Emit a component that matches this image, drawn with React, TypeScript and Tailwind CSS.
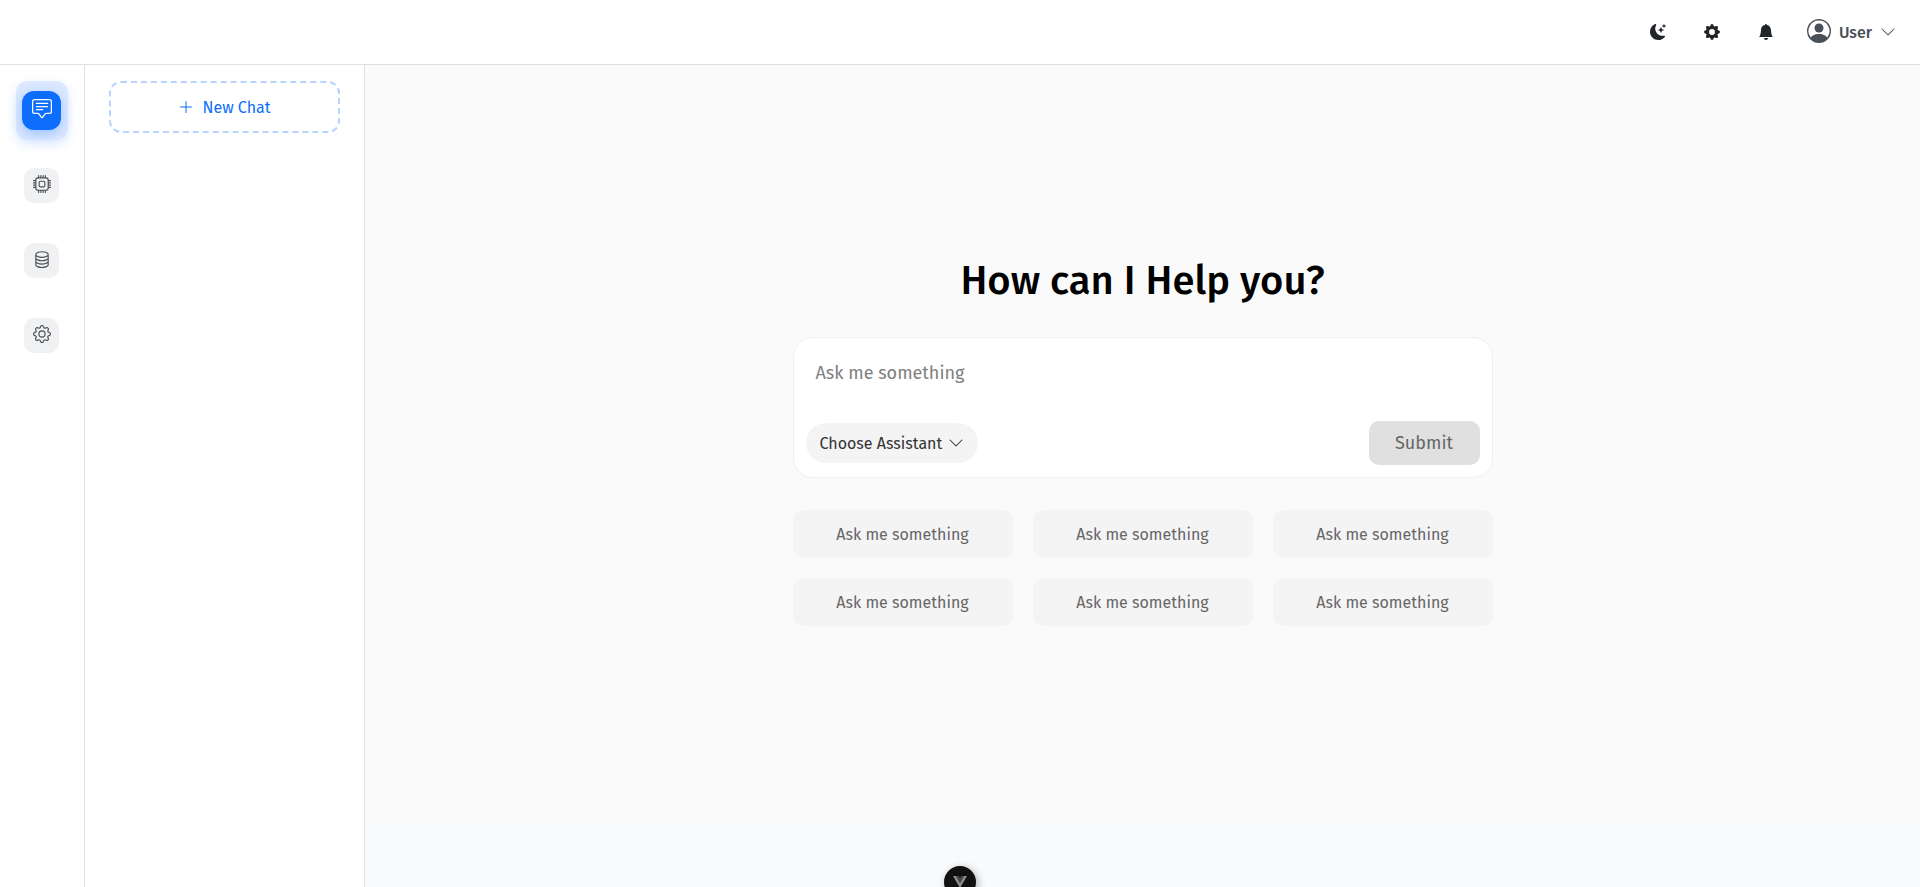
import React, { useState } from 'react';
import {
  BsBellFill,
  BsChatSquareText,
  BsChevronDown,
  BsCpu,
  BsDatabase,
  BsGear,
  BsGearFill,
  BsMoonStarsFill,
  BsPersonCircle,
  BsPlusLg,
} from 'react-icons/bs';
import { clsx } from 'clsx';
import type { IconType } from 'react-icons';

interface SidebarItem {
  label: string;
  icon: IconType;
}

const sidebarItems: SidebarItem[] = [
  { label: 'Chat', icon: BsChatSquareText },
  { label: 'Models', icon: BsCpu },
  { label: 'Knowledge', icon: BsDatabase },
  { label: 'Settings', icon: BsGear },
];

const headerActions: SidebarItem[] = [
  { label: 'Toggle theme', icon: BsMoonStarsFill },
  { label: 'Preferences', icon: BsGearFill },
  { label: 'Notifications', icon: BsBellFill },
];

const suggestions = Array.from({ length: 6 }, () => 'Ask me something');

function Header() {
  return (
    <header className="flex h-[65px] shrink-0 items-center justify-end border-b border-[#e0e0e0] bg-white px-6">
      <div className="flex items-center gap-[38px]">
        {headerActions.map(({ label, icon: Icon }) => (
          <button key={label} type="button" aria-label={label} className="text-[#212529]">
            <Icon className="size-4" />
          </button>
        ))}
      </div>
      <button type="button" className="ml-[33px] flex items-center gap-2 text-base leading-[19px] font-medium text-[#495057]">
        <BsPersonCircle className="mb-[2px] size-6" />
        User
        <BsChevronDown className="size-4" />
      </button>
    </header>
  );
}

function Sidebar() {
  const [active, setActive] = useState('Chat');

  return (
    <nav
      className="flex w-[85px] shrink-0 flex-col gap-4 border-r border-[#e0e0e0] bg-white px-4 pt-4"
      aria-label="Main"
    >
      {sidebarItems.map(({ label, icon: Icon }) => {
        const isActive = label === active;
        return (
          <button
            key={label}
            type="button"
            aria-label={label}
            onClick={() => setActive(label)}
            className={clsx(
              'flex h-[59px] items-center justify-center rounded-xl pr-px',
              isActive && 'bg-[#dbe8ff] shadow-[0_4px_12px_rgba(13,110,253,0.15)]'
            )}
          >
            <span
              className={clsx(
                'flex items-center justify-center pb-[3px]',
                isActive
                  ? 'size-[39px] rounded-xl bg-[#0d6efd] text-white shadow-[0_4px_12px_rgba(13,110,253,0.3)]'
                  : 'size-[35px] rounded-[10px] bg-[#f0f1f3] text-[#495057]'
              )}
            >
              <Icon className={isActive ? 'size-5' : 'size-[18px]'} />
            </span>
          </button>
        );
      })}
    </nav>
  );
}

function ChatList() {
  return (
    <aside className="w-[280px] shrink-0 border-r border-[#e0e0e0] bg-white px-6 pt-4">
      <button
        type="button"
        className="flex h-[52px] w-full items-center justify-center gap-2 rounded-xl border-2 border-dashed border-[#b6d4fe] text-base leading-[19px] text-[#0d6efd]"
      >
        <BsPlusLg className="size-4" />
        New Chat
      </button>
    </aside>
  );
}

function PromptBox() {
  const [prompt, setPrompt] = useState('');

  return (
    <form
      className="w-full rounded-[20px] border border-[#f0f0f0] bg-white p-3"
      onSubmit={(e) => e.preventDefault()}
    >
      <textarea
        aria-label="Prompt"
        placeholder="Ask me something"
        value={prompt}
        onChange={(e) => setPrompt(e.target.value)}
        className="block h-[71px] w-full resize-none px-[10px] py-2 text-lg leading-[30px] text-black outline-none placeholder:text-[#808080]"
      />
      <div className="flex items-center justify-between">
        <div className="relative">
          <select
            aria-label="Choose Assistant"
            className="h-10 w-[172px] appearance-none rounded-[20px] bg-[#f4f4f4] pt-px pl-[14px] text-base leading-[19px] text-[#333333] outline-none"
          >
            <option>Choose Assistant</option>
          </select>
          <BsChevronDown className="pointer-events-none absolute top-3 right-[14px] size-4 text-[#333333]" />
        </div>
        <button
          type="submit"
          disabled={!prompt}
          className="h-11 w-[111px] rounded-[10px] bg-[#e0e0e0] text-lg text-[#666666]"
        >
          Submit
        </button>
      </div>
    </form>
  );
}

export default function App() {
  return (
    <div className="relative flex h-screen flex-col overflow-hidden bg-[#f8fafc] font-['Fira_Sans','Noto_Sans',sans-serif]">
      <Header />
      <div className="flex min-h-0 flex-1">
        <Sidebar />
        <ChatList />
        <div className="flex flex-1 flex-col pb-16">
          <main className="flex flex-1 flex-col items-center justify-center bg-[#fafafa] pb-3">
            <div className="flex w-full max-w-[700px] flex-col items-center">
              <h1 className="mb-[26px] text-[40px] leading-[60px] font-medium text-black">How can I Help you?</h1>
              <PromptBox />
              <div className="mt-8 grid w-full grid-cols-3 gap-5">
                {suggestions.map((text, i) => (
                  <button
                    key={i}
                    type="button"
                    className="h-12 rounded-[10px] bg-[#f4f4f4] pt-px text-base leading-[19px] text-[#666666]"
                  >
                    {text}
                  </button>
                ))}
              </div>
            </div>
          </main>
        </div>
      </div>

      {/* Floating devtools toggle, half hidden below the window edge */}
      <button
        type="button"
        aria-label="Toggle devtools"
        className="absolute -bottom-[11px] left-1/2 flex size-8 -translate-x-1/2 items-center justify-center rounded-full bg-[#111111] shadow-[2px_2px_8px_rgba(0,0,0,0.3)]"
      >
        <svg className="w-[14px]" viewBox="0 0 256 221" aria-hidden="true">
          <path fill="#8c8c8c" d="M204.8 0H256L128 220.8 0 0h97.92L128 51.2 157.44 0z" />
          <path fill="#444444" d="M50.56 0 128 133.12 204.8 0h-47.36L128 51.2 97.92 0z" />
        </svg>
      </button>
    </div>
  );
}
